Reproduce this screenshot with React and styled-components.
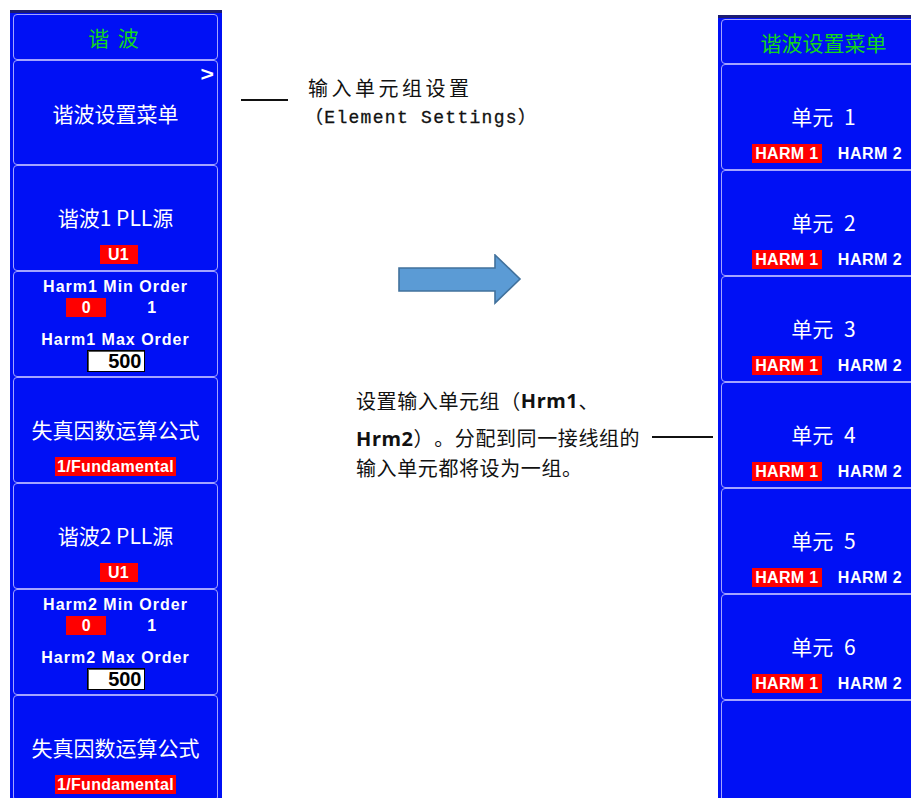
import styled, { createGlobalStyle } from 'styled-components'

const GlobalStyle = createGlobalStyle`
    html, body {
        margin: 0;
        padding: 0;
        background: #fff;
    }
    body {
        width: 911px;
        height: 798px;
        overflow: hidden;
        font-family: "Noto Sans", "Noto Sans CJK SC", sans-serif;
        text-spacing-trim: space-all;
    }
`

const Page = styled.div`
    display: flex;
    align-items: flex-start;
    width: 911px;
    height: 798px;
    overflow: hidden;
`

const Panel = styled.div`
    flex-shrink: 0;
    box-sizing: border-box;
    width: 212px;
    height: ${({ $top }) => 798 - $top}px;
    margin-top: ${({ $top }) => $top}px;
    margin-left: ${({ $left }) => $left || 0}px;
    background: #0010f5;
    border-top: 3px solid #1c1c70;
    padding: 1px 4px 0 3px;
    display: flex;
    flex-direction: column;
    overflow: hidden;
`

const Card = styled.div`
    position: relative;
    flex-shrink: 0;
    box-sizing: border-box;
    height: ${({ $h }) => $h || 106}px;
    border: 1px solid #a4a4ff;
    border-radius: 4px;
    display: flex;
    flex-direction: column;
    align-items: center;
    justify-content: ${({ $align }) => $align || 'flex-end'};
    padding-bottom: ${({ $pb }) => ($pb === undefined ? 6 : $pb)}px;
    padding-top: ${({ $pt }) => $pt || 0}px;
    gap: ${({ $gap }) => ($gap === undefined ? 16 : $gap)}px;
`

const Title = styled.div`
    font-family: "Noto Sans CJK SC", sans-serif;
    font-size: 21px;
    line-height: 24px;
    color: #12d61a;
    word-spacing: 4px;
    margin-right: ${({ $mr }) => $mr || 0}px;
`

const Label = styled.div`
    font-family: "Noto Sans CJK SC", sans-serif;
    font-size: 21px;
    line-height: 24px;
    color: #fff;
    white-space: nowrap;
    word-spacing: ${({ $ws }) => $ws || 0}px;
`

const Chevron = styled.span`
    position: absolute;
    top: 2px;
    right: 4px;
    font-family: "Liberation Sans", sans-serif;
    font-weight: 700;
    font-size: 21px;
    line-height: 21px;
    color: #fff;
    transform: scaleX(1.1);
`

const RedTag = styled.span`
    display: inline-block;
    background: #ff0000;
    color: #fff;
    font-family: "Liberation Sans", sans-serif;
    font-weight: 700;
    font-size: 16px;
    line-height: 19px;
    padding: 0 ${({ $px }) => ($px === undefined ? 2 : $px)}px;
    min-width: ${({ $w }) => $w || 0}px;
    margin-left: ${({ $ml }) => $ml || 0}px;
    box-sizing: border-box;
    text-align: center;
    letter-spacing: 0.3px;
`

const PlainTag = styled.span`
    font-family: "Liberation Sans", sans-serif;
    font-weight: 700;
    font-size: 16px;
    line-height: 19px;
    color: #fff;
    letter-spacing: 0.5px;
`

const TagRow = styled.div`
    display: flex;
    align-items: center;
    gap: ${({ $gap }) => $gap}px;
    padding-right: ${({ $pr }) => $pr || 0}px;
    padding-left: ${({ $pl }) => $pl || 0}px;
    margin-top: ${({ $mt }) => $mt || 0}px;
`

const OrderLabel = styled.div`
    font-family: "Liberation Sans", sans-serif;
    font-weight: 700;
    font-size: 16px;
    line-height: 18px;
    letter-spacing: 1px;
    color: #fff;
    white-space: nowrap;
    margin-top: ${({ $mt }) => $mt || 0}px;
`

const ValueBox = styled.div`
    box-sizing: border-box;
    width: 58px;
    height: 22px;
    margin-top: 1px;
    background: #fff;
    border: 1px solid #000;
    box-shadow: inset 1px 1px 0 #555;
    color: #000;
    font-family: "Liberation Sans", sans-serif;
    font-weight: 700;
    font-size: 20px;
    line-height: 20px;
    text-align: right;
    padding-right: 2px;
`

const Middle = styled.div`
    flex-shrink: 0;
    width: 496px;
    display: flex;
    flex-direction: column;
`

const Callout = styled.div`
    display: flex;
    align-items: flex-start;
    margin-top: 73px;
    padding-left: 19px;
`

const Leader = styled.span`
    display: block;
    flex-shrink: 0;
    height: 2px;
    background: #111;
    width: ${({ $w }) => $w || 47}px;
    margin-top: ${({ $mt }) => $mt || 0}px;
    margin-right: ${({ $mr }) => $mr || 0}px;
    margin-left: ${({ $ml }) => $ml || 0}px;
`

const CalloutText = styled.div`
    display: flex;
    flex-direction: column;
    color: #111;
`

const CalloutHead = styled.div`
    font-family: "Noto Sans CJK SC", sans-serif;
    font-size: 20px;
    line-height: 30px;
    letter-spacing: 3.5px;
`

const CalloutSub = styled.div`
    font-family: "Liberation Mono", "Noto Sans CJK SC", monospace;
    font-size: 18px;
    line-height: 30px;
    letter-spacing: 1.3px;
    margin-left: -3px;
    -webkit-text-stroke: 0.3px #111;
`

const ArrowWrap = styled.div`
    margin-top: 121px;
    margin-left: 176px;
    width: 124px;
    height: 52px;
`

const Note = styled.div`
    margin-top: 79px;
    padding-left: 134px;
    color: #111;
    font-family: "Noto Sans", "Noto Sans CJK SC", sans-serif;
    font-size: 20px;
    letter-spacing: 0.6px;
`

const NoteLine = styled.div`
    display: flex;
    align-items: center;
    height: 30px;
    width: 357px;
    white-space: nowrap;
    margin-bottom: ${({ $mb }) => $mb || 0}px;

    b {
        font-weight: 700;
    }
`

const HarmonicCard = ({ title, tag, tagWidth, tagShift }) => (
    <Card>
        <Label>{title}</Label>
        <RedTag $w={tagWidth} $ml={tagShift}>{tag}</RedTag>
    </Card>
)

const OrderCard = ({ n }) => (
    <Card $align="flex-start" $pt={6} $pb={0} $gap={0}>
        <OrderLabel>Harm{n} Min Order</OrderLabel>
        <TagRow $gap={41} $pr={8} $mt={2}>
            <RedTag $w={40}>0</RedTag>
            <PlainTag>1</PlainTag>
        </TagRow>
        <OrderLabel $mt={14}>Harm{n} Max Order</OrderLabel>
        <ValueBox>500</ValueBox>
    </Card>
)

const ElementCard = ({ n }) => (
    <Card>
        <Label $ws={6}>单元 {n}</Label>
        <TagRow $gap={16} $pl={7}>
            <RedTag $w={70}>HARM 1</RedTag>
            <PlainTag>HARM 2</PlainTag>
        </TagRow>
    </Card>
)

const App = () => {
    return (
        <>
            <GlobalStyle />
            <Page>
                <Panel $top={10} $left={10}>
                    <Card $h={46} $align="center" $pb={0}>
                        <Title $mr={4}>谐 波</Title>
                    </Card>
                    <Card $h={105} $align="center" $pb={0}>
                        <Chevron>&gt;</Chevron>
                        <Label>谐波设置菜单</Label>
                    </Card>
                    <HarmonicCard title="谐波1 PLL源" tag="U1" tagWidth={38} tagShift={6} />
                    <OrderCard n={1} />
                    <HarmonicCard title="失真因数运算公式" tag="1/Fundamental" />
                    <HarmonicCard title="谐波2 PLL源" tag="U1" tagWidth={38} tagShift={6} />
                    <OrderCard n={2} />
                    <HarmonicCard title="失真因数运算公式" tag="1/Fundamental" />
                </Panel>

                <Middle>
                    <Callout>
                        <Leader $mt={26} $mr={20} />
                        <CalloutText>
                            <CalloutHead>输入单元组设置</CalloutHead>
                            <CalloutSub>（Element Settings）</CalloutSub>
                        </CalloutText>
                    </Callout>

                    <ArrowWrap>
                        <svg width="124" height="52" viewBox="0 0 124 52">
                            <polygon
                                points="1,14 97,14 97,1 122,25 97,49 97,37 1,37"
                                fill="#5b9bd5"
                                stroke="#41719c"
                                strokeWidth="1.6"
                                strokeLinejoin="miter"
                            />
                        </svg>
                    </ArrowWrap>

                    <Note>
                        <NoteLine $mb={7}>
                            设置输入单元组（<b>Hrm1</b>、
                        </NoteLine>
                        <NoteLine>
                            <span><b>Hrm2</b>）。分配到同一接线组的</span>
                            <Leader $ml={12} $w={61} />
                        </NoteLine>
                        <NoteLine>输入单元都将设为一组。</NoteLine>
                    </Note>
                </Middle>

                <Panel $top={15}>
                    <Card $h={45} $align="center" $pb={0}>
                        <Title>谐波设置菜单</Title>
                    </Card>
                    {[1, 2, 3, 4, 5, 6].map((n) => (
                        <ElementCard key={n} n={n} />
                    ))}
                    <Card />
                </Panel>
            </Page>
        </>
    )
}

export default App
